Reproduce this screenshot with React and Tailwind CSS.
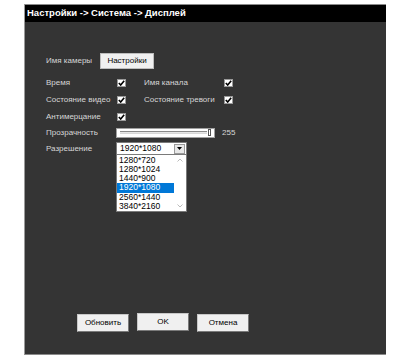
import React from "react";

function Check() {
  return (
    <div className="w-[9px] h-[8px] bg-white border border-[#9a9a9a] flex items-center justify-center">
      <svg width="7" height="6" viewBox="0 0 7 6">
        <path d="M0.8 3 L2.7 5 L6.2 0.8" stroke="#000" strokeWidth="1.6" fill="none" />
      </svg>
    </div>
  );
}

function Btn({ children, className = "" }) {
  return (
    <div
      className={
        "w-[52px] h-[18px] bg-[#f0f0f0] border border-[#c8c8c8] border-b-[#7a7a7a] border-r-[#7a7a7a] text-black flex items-center justify-center text-[8px] " +
        className
      }
    >
      {children}
    </div>
  );
}

const resolutions = ["1280*720", "1280*1024", "1440*900", "1920*1080", "2560*1440", "3840*2160"];

export default function App() {
  return (
    <div className="w-[410px] h-[360px] bg-white pt-[4px] pl-[24px] font-['Liberation_Sans',Arial,sans-serif]">
      <div className="w-[362px] h-[351px] bg-[#343434] border-l border-[#9a9a9a] border-b border-b-[#8a8a8a] flex flex-col">
        <div className="h-[1px] bg-[#8a8a8a]" />
        <div className="h-[17px] bg-black text-white font-bold text-[9.5px] flex items-center pl-[2px]">
          Настройки -&gt; Система -&gt; Дисплей
        </div>

        <div className="pl-[21px] text-[8px] text-[#d6d6d6] flex flex-col">
          <div className="mt-[31px] h-[16px] flex items-center">
            <span className="w-[54px]">Имя камеры</span>
            <div className="w-[54px] h-[16px] bg-[#f0f0f0] border border-[#bdbdbd] text-black flex items-center justify-center">
              Настройки
            </div>
          </div>

          <div className="mt-[5px] h-[17px] flex items-center">
            <span className="w-[71px]">Время</span>
            <Check />
            <span className="ml-[18px] w-[80px]">Имя канала</span>
            <Check />
          </div>

          <div className="h-[17px] flex items-center">
            <span className="w-[71px]">Состояние видео</span>
            <Check />
            <span className="ml-[18px] w-[80px]">Состояние тревоги</span>
            <Check />
          </div>

          <div className="h-[17px] flex items-center">
            <span className="w-[71px]">Антимерцание</span>
            <Check />
          </div>

          <div className="h-[15px] flex items-center">
            <span className="w-[70px]">Прозрачность</span>
            <div className="w-[99px] h-[10px] bg-white border border-[#a0a0a0] flex items-center px-[3px]">
              <div className="flex-1 h-[3px] border-t border-[#8a8a8a] border-b border-b-[#d8d8d8] bg-[#e6e6e6]" />
              <div className="w-[3px] h-[7px] bg-white border border-[#555] ml-[1px]" />
            </div>
            <span className="ml-[7px]">255</span>
          </div>

          <div className="mt-[1px] h-[15px] flex items-center">
            <span className="w-[70px]">Разрешение</span>
            <div className="relative w-[71px] h-[14px] bg-white border border-[#7a7a7a] flex items-center text-black">
              <span className="flex-1 pl-[3px] text-[8.5px]">1920*1080</span>
              <div className="w-[11px] h-[10px] mr-[1px] bg-[#e8e8e8] border border-[#9a9a9a] flex items-center justify-center">
                <svg width="5" height="3" viewBox="0 0 5 3">
                  <path d="M0 0 H5 L2.5 3 Z" fill="#000" />
                </svg>
              </div>
              <div className="absolute left-[-1px] top-[11px] w-[71px] h-[58px] bg-white border border-[#7a7a7a] flex">
                <div className="flex-1 flex flex-col pt-[1px]">
                  {resolutions.map((r) => (
                    <div
                      key={r}
                      className={
                        "h-[9.3px] leading-[9.3px] pl-[2px] text-[8.5px] " +
                        (r === "1920*1080" ? "bg-[#0078d7] text-white" : "text-black")
                      }
                    >
                      {r}
                    </div>
                  ))}
                </div>
                <div className="w-[12px] flex flex-col items-center justify-between py-[3px]">
                  <svg width="6" height="4" viewBox="0 0 6 4">
                    <path d="M0.5 3.5 L3 1 L5.5 3.5" stroke="#bbb" fill="none" />
                  </svg>
                  <svg width="6" height="4" viewBox="0 0 6 4">
                    <path d="M0.5 0.5 L3 3 L5.5 0.5" stroke="#bbb" fill="none" />
                  </svg>
                </div>
              </div>
            </div>
          </div>

          <div className="mt-[157px] pl-[31px] flex items-start gap-[8px]">
            <Btn className="mt-[1px]">Обновить</Btn>
            <Btn>OK</Btn>
            <Btn className="mt-[1px]">Отмена</Btn>
          </div>
        </div>
      </div>
    </div>
  );
}
